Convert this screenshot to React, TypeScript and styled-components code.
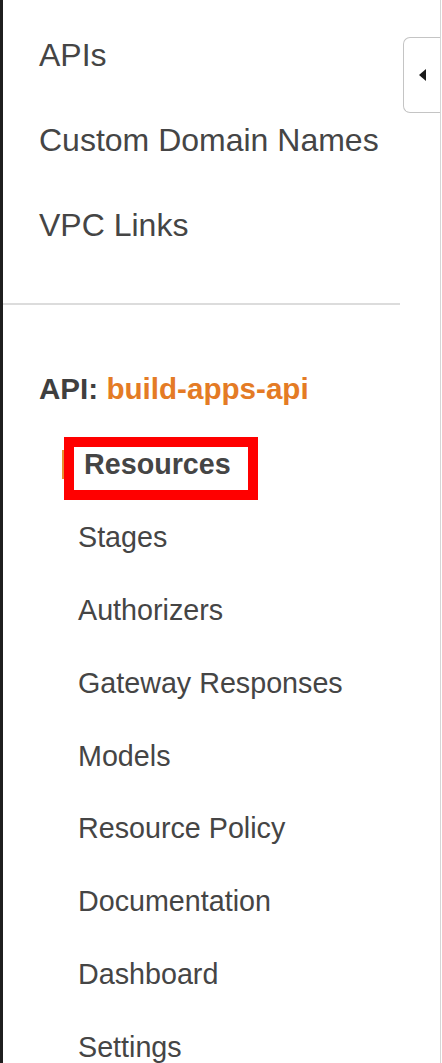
import React from "react";
import styled, { createGlobalStyle } from "styled-components";

const Global = createGlobalStyle`
  html, body { margin: 0; padding: 0; background: #ffffff; }
  body { font-family: "Liberation Sans", Arial, Helvetica, sans-serif; }
`;

const Sidebar = styled.div`
  position: relative;
  box-sizing: border-box;
  width: 441px;
  min-height: 1063px;
  background: #ffffff;
  border-left: 3px solid #1f1f1f;
  border-right: 1px solid #d6d6d6;
  overflow: hidden;
`;

const Nav = styled.nav`
  display: flex;
  flex-direction: column;
  width: 397px;
`;

const TopList = styled.ul`
  list-style: none;
  margin: 0;
  padding: 35px 0 0 36px;
  display: flex;
  flex-direction: column;
  gap: 45px;
`;

const TopItem = styled.li`
  font-size: 32px;
  line-height: 40px;
  color: #454545;
  white-space: nowrap;
`;

const Divider = styled.hr`
  margin: 58px 0 0 0;
  border: none;
  height: 2px;
  background: #dcdcdc;
  width: 397px;
`;

const ApiLabel = styled.div`
  margin: 66px 0 0 36px;
  font-size: 29.6px;
  line-height: 36px;
  font-weight: 700;
  color: #3f3f3f;
  white-space: nowrap;
`;

const ApiName = styled.span`
  color: #e47b25;
`;

const SubList = styled.ul`
  list-style: none;
  margin: 39px 0 0 0;
  padding: 0 0 0 59px;
  display: flex;
  flex-direction: column;
  gap: 36.9px;
`;

const SubItem = styled.li<{ $active?: boolean }>`
  position: relative;
  box-sizing: border-box;
  font-size: 28.7px;
  line-height: 36px;
  color: #454545;
  white-space: nowrap;
  padding-left: ${(p) => (p.$active ? "22px" : "16px")};
  font-weight: ${(p) => (p.$active ? 700 : 400)};

  &::before {
    content: "";
    display: ${(p) => (p.$active ? "block" : "none")};
    position: absolute;
    left: 0;
    top: 4px;
    bottom: 3px;
    width: 3px;
    background: #e8912f;
  }
`;

const Highlight = styled.span`
  position: absolute;
  box-sizing: border-box;
  left: 2px;
  top: -9px;
  width: 194px;
  height: 63px;
  border: 10px solid #ff0000;
  pointer-events: none;
`;

const CollapseTab = styled.button`
  position: absolute;
  top: 37px;
  right: -1px;
  box-sizing: border-box;
  width: 38px;
  height: 76px;
  padding: 0 0 0 15px;
  background: #ffffff;
  border: 1px solid #c4c4c4;
  border-right: none;
  border-radius: 7px 0 0 7px;
  display: flex;
  align-items: center;
  justify-content: flex-start;
  cursor: pointer;
`;

const Arrow = styled.span`
  display: block;
  width: 0;
  height: 0;
  border-top: 6px solid transparent;
  border-bottom: 6px solid transparent;
  border-right: 7px solid #1a1a1a;
`;

const topItems = ["APIs", "Custom Domain Names", "VPC Links"];
const subItems = [
  "Resources",
  "Stages",
  "Authorizers",
  "Gateway Responses",
  "Models",
  "Resource Policy",
  "Documentation",
  "Dashboard",
  "Settings",
];

export default function App() {
  return (
    <>
      <Global />
      <Sidebar>
        <Nav>
          <TopList>
            {topItems.map((t) => (
              <TopItem key={t}>{t}</TopItem>
            ))}
          </TopList>
          <Divider />
          <ApiLabel>
            API: <ApiName>build-apps-api</ApiName>
          </ApiLabel>
          <SubList>
            {subItems.map((t, i) => (
              <SubItem key={t} $active={i === 0}>
                {t}
                {i === 0 && <Highlight />}
              </SubItem>
            ))}
          </SubList>
        </Nav>
        <CollapseTab aria-label="Collapse">
          <Arrow />
        </CollapseTab>
      </Sidebar>
    </>
  );
}
